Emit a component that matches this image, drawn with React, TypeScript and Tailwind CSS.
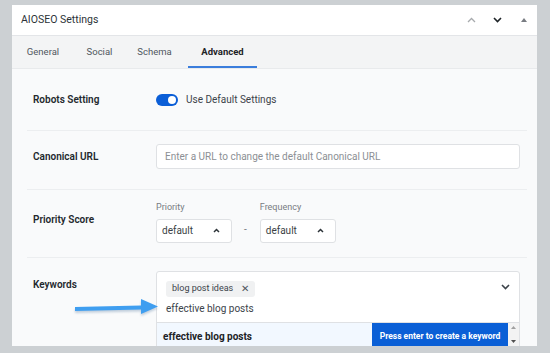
import React from "react";

const font = { fontFamily: 'Roboto, "Noto Sans", sans-serif' };

function ChevUp({ className = "" }: { className?: string }) {
  return (
    <svg width="9" height="6" viewBox="0 0 9 6" className={className}>
      <path d="M1 5 L4.5 1.5 L8 5" fill="none" stroke="currentColor" strokeWidth="1.3" />
    </svg>
  );
}
function ChevDown({ className = "" }: { className?: string }) {
  return (
    <svg width="9" height="6" viewBox="0 0 9 6" className={className}>
      <path d="M1 1 L4.5 4.5 L8 1" fill="none" stroke="currentColor" strokeWidth="1.6" />
    </svg>
  );
}
function Caret() {
  return (
    <svg width="7" height="5" viewBox="0 0 7 5" className="text-[#2c3338]">
      <path d="M1 4 L3.5 1.5 L6 4" fill="none" stroke="currentColor" strokeWidth="1.5" />
    </svg>
  );
}

function Select() {
  return (
    <div className="flex h-[24px] w-[76px] items-center justify-between rounded-[3px] border border-[#dfe1e4] bg-white pl-[5px] pr-[11px] text-[10px] text-[#3b3f45]">
      <span>default</span>
      <Caret />
    </div>
  );
}

export default function App() {
  return (
    <div className="relative h-[353px] w-[550px] overflow-hidden bg-[#ccd0d3] pl-[12px] pt-[5px]" style={font}>
      <div className="flex h-[341px] w-[525px] flex-col overflow-hidden bg-white">
        {/* header */}
        <div className="flex h-[31px] shrink-0 items-center border-b border-[#e3e5e8] pl-[9px] pr-[10px]">
          <span className="text-[10.5px] text-[#2c3338]">AIOSEO Settings</span>
          <div className="ml-auto flex items-center">
            <ChevUp className="text-[#a7aaad]" />
            <ChevDown className="ml-[17px] text-[#1d2327]" />
            <svg width="6" height="4" viewBox="0 0 6 4" className="ml-[19px] text-[#787c82]">
              <path d="M0 4 L3 0 L6 4 Z" fill="currentColor" />
            </svg>
          </div>
        </div>
        {/* tabs */}
        <div className="flex h-[33px] shrink-0 items-stretch border-b border-[#e8eaec] bg-[#f3f4f5] text-[9.5px] text-[#50575e]">
          <div className="flex w-[62px] items-center justify-center pt-[1px]">General</div>
          <div className="flex w-[51px] items-center justify-center pt-[1px]">Social</div>
          <div className="flex w-[59px] items-center justify-center pt-[1px]">Schema</div>
          <div className="ml-[4px] flex w-[69px] items-center justify-center border-b-[2px] border-[#3a7ddc] pt-[3px] font-bold text-[#1d2327]">Advanced</div>
        </div>
        {/* content */}
        <div className="flex flex-1 flex-col bg-[#f9fafb] pl-[15px] pr-[10px]">
          {/* Robots */}
          <div className="flex h-[62px] items-center border-b border-[#eceef0] pl-[6px]">
            <div className="w-[123px] text-[10px] font-semibold text-[#23282d]">Robots Setting</div>
            <div className="flex items-center">
              <div className="flex h-[12px] w-[22px] items-center justify-end rounded-full bg-[#0b5ed7] pr-[2px]">
                <div className="h-[8px] w-[8px] rounded-full bg-white" />
              </div>
              <span className="ml-[8px] text-[10px] text-[#3c434a]">Use Default Settings</span>
            </div>
          </div>
          {/* Canonical */}
          <div className="flex h-[59px] items-start border-b border-[#eceef0] pl-[6px] pt-[13px]">
            <div className="flex h-[25px] w-[123px] items-center text-[10px] font-semibold text-[#23282d]">Canonical URL</div>
            <div className="flex h-[25px] w-[364px] items-center rounded-[3px] border border-[#dfe1e4] bg-white pl-[8px] text-[10px] text-[#8c8f94]">
              Enter a URL to change the default Canonical URL
            </div>
          </div>
          {/* Priority */}
          <div className="flex h-[68px] items-start border-b border-[#eceef0] pl-[6px] pt-[11px]">
            <div className="w-[123px] pt-[11px] text-[10px] font-semibold text-[#23282d]">Priority Score</div>
            <div className="flex items-end">
              <div className="flex flex-col">
                <span className="mb-[4px] text-[9px] text-[#787c82]">Priority</span>
                <Select />
              </div>
              <span className="ml-[12px] mr-[13px] mb-[6px] text-[10px] text-[#787c82]">-</span>
              <div className="flex flex-col">
                <span className="mb-[4px] text-[9px] text-[#787c82]">Frequency</span>
                <Select />
              </div>
            </div>
          </div>
          {/* Keywords */}
          <div className="relative flex flex-1 items-start pl-[6px] pt-[13px]">
            <div className="w-[123px] pt-[6px] text-[10px] font-semibold text-[#23282d]">Keywords</div>
            <div className="flex w-[364px] flex-col rounded-t-[3px] border border-[#dfe1e4] bg-white">
              <div className="flex items-start pl-[9px] pr-[9px] pt-[9px]">
                <div className="flex flex-col">
                  <div className="flex h-[16px] w-fit items-center rounded-[3px] bg-[#f0f1f2] pl-[6px] pr-[6px] text-[9px] text-[#3c434a]">
                    blog post ideas
                    <span className="ml-[8px] text-[10px] leading-none text-[#50575e]">✕</span>
                  </div>
                  <div className="mt-[4px] h-[20px] text-[10px] text-[#3c434a]">effective blog posts</div>
                </div>
                <ChevDown className="ml-auto mt-[3px] text-[#3c434a]" />
              </div>
              <div className="mt-[1px] flex h-[24px] border-t border-[#dfe1e4]">
                <div className="flex flex-1 items-center bg-[#f2f8ff] pl-[6px] pt-[3px] text-[10px] font-bold text-[#1d2327]">effective blog posts</div>
                <div className="flex w-[136px] items-center justify-center whitespace-nowrap bg-[#0a5fd6] pt-[3px] text-[8.5px] font-bold text-white">
                  Press enter to create a keyword
                </div>
                <div className="flex w-[11px] flex-col items-center justify-between bg-[#f3f3f3] py-[3px]">
                  <svg width="5" height="3" viewBox="0 0 5 3"><path d="M0 3 L2.5 0 L5 3Z" fill="#a0a0a0" /></svg>
                  <svg width="5" height="3" viewBox="0 0 5 3"><path d="M0 0 L2.5 3 L5 0Z" fill="#505050" /></svg>
                </div>
              </div>
            </div>
            {/* annotation arrow */}
            <svg className="absolute left-[46px] top-[38px]" width="88" height="24" viewBox="0 0 88 24">
              <defs>
                <filter id="sh" x="-10%" y="-50%" width="120%" height="200%">
                  <feGaussianBlur stdDeviation="1.2" />
                </filter>
              </defs>
              <g filter="url(#sh)" opacity="0.35">
                <path d="M2 11.5 L68 10 L68 3.5 L85 11 L68 18.5 L68 14 L2 15.5 Z" fill="#5c7ea3" transform="translate(0,1.5)" />
              </g>
              <path d="M2 11 L68 9.5 L68 3 L85 10.5 L68 18 L68 13.5 L2 15 Z" fill="#3f9ef0" />
            </svg>
          </div>
        </div>
      </div>
    </div>
  );
}
